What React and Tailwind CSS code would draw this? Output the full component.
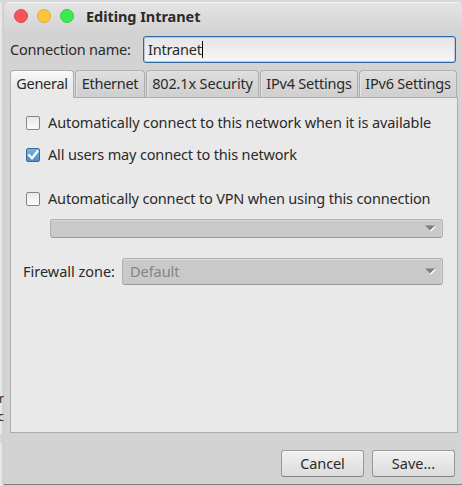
import React from "react";

const TABS = [
  { label: "General", box: "w-[64px]", text: "tracking-[-0.3px]", active: true },
  { label: "Ethernet", box: "w-[70px]", text: "tracking-[-0.3px]" },
  { label: "802.1x Security", box: "w-[113px]", text: "tracking-[-0.15px]" },
  { label: "IPv4 Settings", box: "w-[98px]", text: "tracking-[-0.22px]" },
  { label: "IPv6 Settings", box: "w-[98px]", text: "tracking-[-0.22px]" },
];

function Tab({ label, box, text, active }) {
  const look = active
    ? "h-[28px] border-[#b0b0b0] bg-gradient-to-b from-[#fafafa] to-[#e9e9e9] to-60%"
    : "h-[27px] border-[#adadad] bg-gradient-to-b from-[#dedede] to-[#cfcfcf] shadow-[inset_1px_1px_0_#e3e3e3]";
  return (
    <div className={`relative z-10 flex shrink-0 justify-center rounded-t-[4px] border border-b-0 pt-px leading-[22px] whitespace-nowrap ${box} ${look}`}>
      <span className={text}>{label}</span>
    </div>
  );
}

function Check({ checked, label, text }) {
  return (
    <div className="flex h-[14px] items-center">
      <span
        className={`flex h-[14px] w-[14px] shrink-0 items-center justify-center rounded-[2px] border ${
          checked
            ? "border-[#386a9f] bg-gradient-to-b from-[#7fafdb] to-[#528cc9]"
            : "border-[#858585] bg-gradient-to-b from-[#e8e8e8] to-[#fcfcfc]"
        }`}
      >
        {checked && (
          <svg className="shrink-0" width="12" height="12" viewBox="0 0 12 12" fill="none" stroke="#fff" strokeWidth="2.2">
            <path d="M1.3 5.2 L5 9.2 L11.2 1.4" />
          </svg>
        )}
      </span>
      <span className={`ml-[8px] pb-[2px] whitespace-nowrap ${text}`}>{label}</span>
    </div>
  );
}

function Combo({ box, children }) {
  return (
    <div className={`flex items-center justify-between rounded-[3px] border border-[#b0b0b0] border-b-[#999] bg-[#c9c9c9] pr-[6px] pl-[7px] text-[#858585] shadow-[inset_0_1px_0_#dadada,inset_-1px_0_0_#d6d6d6] ${box}`}>
      <span className="pb-[2px] tracking-[-0.05px]">{children}</span>
      <svg width="11" height="7" viewBox="0 0 11 7">
        <path d="M1 1.5 H11 L6 6.8 Z" fill="#fff" />
        <path d="M0 0.5 H10 L5 5.5 Z" fill="#7d7d7d" />
      </svg>
    </div>
  );
}

function Button({ children, text }) {
  return (
    <button className="flex h-[27px] w-[83px] items-center justify-center rounded-[3px] border border-[#999] border-b-[#858585] bg-gradient-to-b from-[#f1f1f1] to-[#dcdcdc] pb-[2px] shadow-[inset_0_1px_0_#fafafa]">
      <span className={text}>{children}</span>
    </button>
  );
}

export default function App() {
  return (
    <div className="flex h-[486px] w-[462px] overflow-hidden bg-[#d8d8d8] pt-[2px] font-['Noto_Sans',sans-serif] text-[14.5px] leading-[18px] text-[#2a2a2a]">
      <div className="h-[484px] w-[4px] shrink-0 overflow-hidden bg-gradient-to-r from-[#ededed] to-[#cecece] pt-[388px] text-[12px] leading-[18px]">
        <div className="-ml-px">r</div>
        <div className="-ml-[2px]">c</div>
        <div className="mt-[8px] h-[9px] bg-[#d6d6d6]" />
      </div>
      <div className="flex h-[482px] w-[458px] shrink-0 flex-col rounded-t-[5px] bg-[#d3d3d3] bg-gradient-to-b from-[#e4e4e4] to-[#d3d3d3] to-[30px] pl-[6px] shadow-[0_1px_1px_#777,inset_0_1px_0_#f2f2f2]">
        <header className="flex h-[34px] shrink-0 items-center pb-[6px] pl-[4px]">
          <div className="flex gap-[9px]">
            <span className="h-[14px] w-[14px] rounded-full border border-[#dc4a50] bg-[#f6525a]" />
            <span className="h-[14px] w-[14px] rounded-full border border-[#dfad36] bg-[#fbc43b]" />
            <span className="h-[14px] w-[14px] rounded-full border border-[#35cc46] bg-[#3bea4d]" />
          </div>
          <span className="ml-[12px] font-bold tracking-[-0.05px]">Editing Intranet</span>
        </header>
        <div className="flex h-[27px] shrink-0 items-center">
          <span className="w-[133px] pb-[2px] whitespace-nowrap tracking-[-0.22px]">Connection name:</span>
          <div className="flex h-[27px] w-[313px] items-center rounded-[3px] border border-[#2e69a8] bg-gradient-to-b from-[#e4e4e4] to-[#f7f7f7] pl-[4px] shadow-[inset_0_0_0_1px_#b9c9da]">
            <span className="pb-[2px] tracking-[-0.2px]">Intranet</span>
            <span className="h-[17px] w-px bg-black" />
          </div>
        </div>
        <nav className="mt-[7px] flex h-[27px] shrink-0 gap-px">
          {TABS.map((t) => (
            <Tab key={t.label} {...t} />
          ))}
        </nav>
        <main className="flex h-[336px] w-[448px] shrink-0 flex-col border border-[#adadad] bg-[#e9e9e9] pt-[18px] pl-[15px]">
          <Check label="Automatically connect to this network when it is available" text="tracking-[-0.11px]" />
          <div className="mt-[18px]">
            <Check checked label="All users may connect to this network" text="tracking-[-0.16px]" />
          </div>
          <div className="mt-[30px]">
            <Check label="Automatically connect to VPN when using this connection" text="tracking-[-0.16px]" />
          </div>
          <Combo box="mt-[13px] ml-[24px] h-[19px] w-[393px]" />
          <div className="mt-[20px] -ml-[3px] flex items-center">
            <span className="w-[99px] pb-[2px] whitespace-nowrap tracking-[-0.02px]">Firewall zone:</span>
            <Combo box="h-[27px] w-[321px]">Default</Combo>
          </div>
        </main>
        <footer className="mt-[17px] ml-[271px] flex gap-[8px]">
          <Button text="tracking-[-0.1px]">Cancel</Button>
          <Button text="tracking-[0px]">Save...</Button>
        </footer>
      </div>
    </div>
  );
}
